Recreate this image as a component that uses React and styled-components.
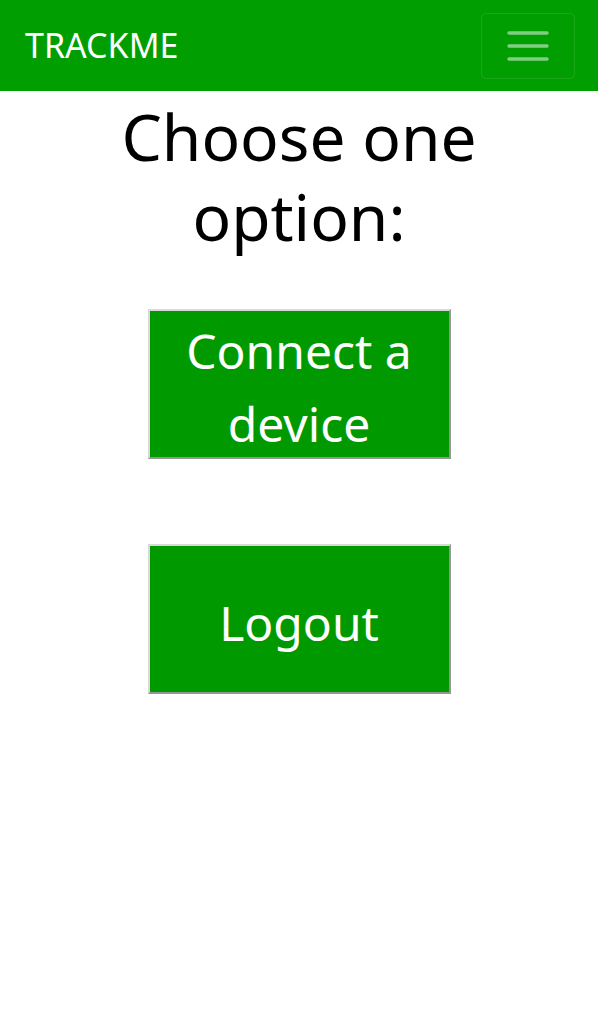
import React from 'react';
import styled, { createGlobalStyle } from 'styled-components';

const GlobalStyle = createGlobalStyle`
  html, body {
    margin: 0;
    padding: 0;
    background: #fff;
  }
  body {
    font-family: "Comic Sans MS", "Noto Sans", sans-serif;
  }
`

const Navbar = styled.nav`
  height: 91px;
  background: #009e00;
  display: flex;
  align-items: center;
  justify-content: space-between;
  padding: 0 23px 0 25px;
  box-sizing: border-box;
`

const Brand = styled.a`
  color: #fff;
  font-size: 34px;
  line-height: 1;
  text-decoration: none;
  margin-top: -2px;
`

const Toggler = styled.button`
  width: 94px;
  height: 66px;
  background: transparent;
  border: 1px solid rgba(255, 255, 255, 0.1);
  border-radius: 5px;
  display: flex;
  align-items: center;
  justify-content: center;
  padding: 0;
`

const Main = styled.main`
  display: flex;
  flex-direction: column;
  align-items: center;
  padding: 6px 20px 0;
`

const Title = styled.h1`
  margin: 0 0 52px;
  font-weight: normal;
  font-size: 64px;
  line-height: 80px;
  text-align: center;
  color: #000;
`

const OptionButton = styled.button`
  width: 303px;
  height: 150px;
  margin-bottom: ${p => p.gap || 0}px;
  background: #009a00;
  color: #fff;
  font-family: inherit;
  font-size: 48px;
  line-height: 73px;
  border: 2px solid;
  border-color: #d9d9d9 #959595 #959595 #d9d9d9;
  padding: 6px 10px 0;
  box-sizing: border-box;
  display: flex;
  align-items: center;
  justify-content: center;
  text-align: center;
`

function HamburgerIcon() {
  return (
    <svg width="42" height="30" viewBox="0 0 42 30">
      <g stroke="rgba(255,255,255,0.5)" strokeWidth="3.5" strokeLinecap="round">
        <line x1="2" y1="2" x2="40" y2="2" />
        <line x1="2" y1="15" x2="40" y2="15" />
        <line x1="2" y1="28" x2="40" y2="28" />
      </g>
    </svg>
  )
}

export default function App() {
  return (
    <>
      <GlobalStyle />
      <Navbar>
        <Brand href="#">TRACKME</Brand>
        <Toggler aria-label="Toggle navigation">
          <HamburgerIcon />
        </Toggler>
      </Navbar>
      <Main>
        <Title>Choose one option:</Title>
        <OptionButton gap={85}>Connect a device</OptionButton>
        <OptionButton>Logout</OptionButton>
      </Main>
    </>
  )
}
